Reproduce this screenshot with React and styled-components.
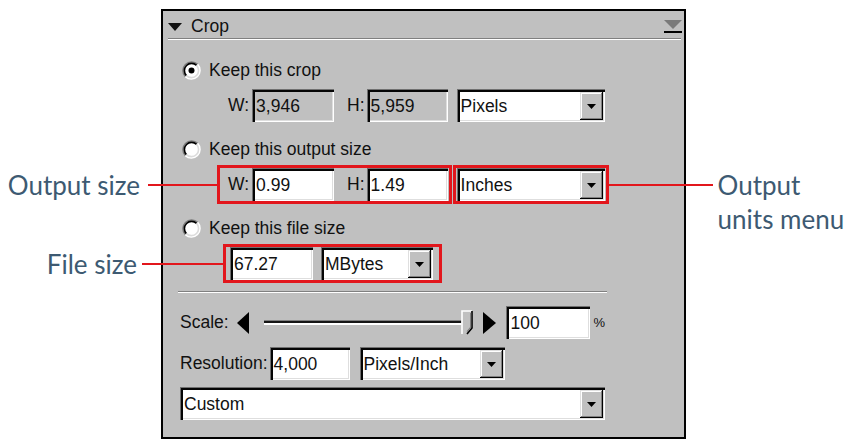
import React from "react";
import styled, { createGlobalStyle } from "styled-components";

const RED = "#e2161c";
const NOTE = "#3d5a72";

const GlobalStyle = createGlobalStyle`
  html, body { margin: 0; padding: 0; background: #fff; }
  body { font-family: "Liberation Sans", Arial, sans-serif; }
`;

const Page = styled.div`
  position: relative;
  width: 846px;
  height: 443px;
  box-sizing: border-box;
  padding: 9px 0 0 161px;
  overflow: hidden;
`;

const Panel = styled.section`
  box-sizing: border-box;
  width: 525px;
  height: 430px;
  border: 2px solid #000;
  background: #c0c0c0;
  color: #111;
  font-size: 17.5px;
  display: flex;
  flex-direction: column;
`;

const Header = styled.header`
  height: 27px;
  box-sizing: border-box;
  padding: 4px 2px 0 5px;
  display: flex;
  align-items: center;
  gap: 9px;
`;

const Title = styled.span`
  flex: 1;
`;

const Rule = styled.div`
  margin: ${(p) => p.$m || "0"};
  border-top: 1px solid #808080;
  border-bottom: 1px solid #fff;
`;

const Body = styled.div`
  padding: 19px 0 0 17px;
  width: 425px;
  display: flex;
  flex-direction: column;
`;

const Options = styled.div`
  display: flex;
  flex-direction: column;
  gap: 16px;
`;

const Option = styled.div`
  display: flex;
  flex-direction: column;
  gap: 8px;
`;

const RadioRow = styled.div`
  height: 22px;
  display: flex;
  align-items: center;
  gap: 8px;
  padding-left: 2px;
`;

const Row = styled.div`
  height: 33px;
  display: flex;
  align-items: center;
  padding-left: ${(p) => p.$indent || 0}px;
  margin-top: ${(p) => p.$mt || 0}px;
`;

const Group = styled.div`
  position: relative;
  display: flex;
  align-items: center;
  height: 33px;
  padding: ${(p) => p.$pad || "0"};
  gap: ${(p) => p.$gap || 0}px;
  margin-left: ${(p) => p.$ml || 0}px;
  box-shadow: ${(p) => (p.$hl ? `0 0 0 3px ${RED}` : "none")};
`;

const Label = styled.span`
  flex: none;
  white-space: nowrap;
  margin: ${(p) => p.$m || "0"};
  font-size: ${(p) => p.$size || "inherit"};
`;

const Field = styled.div`
  box-sizing: border-box;
  flex: none;
  width: ${(p) => (p.$w ? `${p.$w}px` : "auto")};
  height: 33px;
  display: flex;
  align-items: stretch;
  padding: 3px 2px 2px 3px;
  background: ${(p) => (p.$disabled ? "#c0c0c0" : "#fff")};
  box-shadow: inset 1px 1px 0 #707070, inset 3px 3px 0 #050505,
    inset -1px -1px 0 #fff, inset -2px -2px 0 #dedede;
`;

const FieldText = styled.span`
  flex: 1;
  display: flex;
  align-items: center;
  padding-left: 1px;
  white-space: nowrap;
  overflow: hidden;
`;

const DropButton = styled.span`
  flex: none;
  width: 23px;
  display: flex;
  align-items: center;
  justify-content: center;
  background: #c0c0c0;
  box-shadow: inset -1px -1px 0 #000, inset 1px 1px 0 #dfdfdf,
    inset -2px -2px 0 #808080, inset 2px 2px 0 #fff;
`;

const Slider = styled.div`
  flex: 1;
  display: flex;
  align-items: center;
  height: 26px;
  margin: 0 10px 0 15px;
`;

const Groove = styled.div`
  flex: 1;
  height: 0;
  border-top: 2px solid #151515;
  border-bottom: 2px solid #fff;
  box-shadow: 0 -1px 0 #808080;
`;

const StepArrow = styled.svg`
  flex: none;
  display: block;
`;

const NoteText = styled.span`
  font-family: Lato, "Open Sans", sans-serif;
  font-size: 26px;
  line-height: 34px;
  color: ${NOTE};
  white-space: nowrap;
`;

const Leader = styled.span`
  display: block;
  flex: none;
  width: ${(p) => p.$w}px;
  height: 2px;
  margin-top: ${(p) => p.$mt || 0}px;
  background: ${RED};
`;

const CalloutLeft = styled.div`
  position: absolute;
  right: calc(100% + 3px);
  top: 50%;
  transform: translateY(-50%);
  display: flex;
  align-items: center;
  gap: ${(p) => p.$gap}px;
`;

const CalloutRight = styled.div`
  position: absolute;
  left: calc(100% + 3px);
  top: 50%;
  margin-top: -17px;
  display: flex;
  align-items: flex-start;
  gap: 5px;
`;

const Radio = ({ checked }) => {
  const c = 9.5;
  const pt = (r, a) => {
    const rad = (a * Math.PI) / 180;
    return `${(c + r * Math.cos(rad)).toFixed(2)} ${(c + r * Math.sin(rad)).toFixed(2)}`;
  };
  const arc = (r, from, to) => `M${pt(r, from)} A${r} ${r} 0 0 1 ${pt(r, to)}`;
  return (
    <svg width="19" height="19" viewBox="0 0 19 19" style={{ flex: "none" }}>
      <circle cx={c} cy={c} r="8.5" fill="#fff" />
      <path d={arc(8.6, 135, 315)} stroke="#7a7a7a" strokeWidth="1.6" fill="none" />
      <path d={arc(7.2, 135, 315)} stroke="#000" strokeWidth="1.6" fill="none" />
      <path d={arc(8.6, 315, 135)} stroke="#fff" strokeWidth="1.6" fill="none" />
      <path d={arc(7.2, 315, 135)} stroke="#dcdcdc" strokeWidth="1.6" fill="none" />
      {checked && <circle cx={c} cy={c} r="3" fill="#000" />}
    </svg>
  );
};

const DownGlyph = () => (
  <svg width="9" height="5" viewBox="0 0 9 5">
    <path d="M0 0H9L4.5 5Z" fill="#000" />
  </svg>
);

const Dropdown = ({ w, children }) => (
  <Field $w={w}>
    <FieldText>{children}</FieldText>
    <DropButton>
      <DownGlyph />
    </DropButton>
  </Field>
);

const TextField = ({ w, disabled, children }) => (
  <Field $w={w} $disabled={disabled}>
    <FieldText>{children}</FieldText>
  </Field>
);

const SizePair = ({ w, h, disabled, hl, children }) => (
  <Group $hl={hl} $pad="0 1px 0 8px">
    <Label $m="0 3px 0 0">W:</Label>
    <TextField w={82} disabled={disabled}>{w}</TextField>
    <Label $m="0 2px 0 13px">H:</Label>
    <TextField w={81} disabled={disabled}>{h}</TextField>
    {children}
  </Group>
);

export default function App() {
  return (
    <Page>
      <GlobalStyle />
      <Panel>
        <Header>
          <svg width="14" height="8" viewBox="0 0 14 8">
            <path d="M0 0H14L7 8Z" fill="#111" />
          </svg>
          <Title>Crop</Title>
          <svg width="18" height="14" viewBox="0 0 18 14">
            <path d="M0 0H18L9 9Z" fill="#7a7a7a" />
            <rect x="0" y="11" width="18" height="2" fill="#000" />
          </svg>
        </Header>
        <Rule $m="0 3px 0 5px" />
        <Body>
          <Options>
            <Option>
              <RadioRow>
                <Radio checked />
                Keep this crop
              </RadioRow>
              <Row $indent={40}>
                <SizePair w="3,946" h="5,959" disabled />
                <Group $pad="0 1px" $ml={7}>
                  <Dropdown w={148}>Pixels</Dropdown>
                </Group>
              </Row>
            </Option>
            <Option>
              <RadioRow>
                <Radio />
                Keep this output size
              </RadioRow>
              <Row $indent={40}>
                <SizePair w="0.99" h="1.49" hl>
                  <CalloutLeft $gap={8}>
                    <NoteText>Output size</NoteText>
                    <Leader $w={69} />
                  </CalloutLeft>
                </SizePair>
                <Group $pad="0 1px" $ml={7} $hl>
                  <Dropdown w={148}>Inches</Dropdown>
                  <CalloutRight>
                    <Leader $w={104} $mt={16} />
                    <NoteText>
                      Output
                      <br />
                      units menu
                    </NoteText>
                  </CalloutRight>
                </Group>
              </Row>
            </Option>
            <Option>
              <RadioRow>
                <Radio />
                Keep this file size
              </RadioRow>
              <Row $indent={46}>
                <Group $hl $pad="0 6px 0 4px" $gap={8}>
                  <TextField w={83}>67.27</TextField>
                  <Dropdown w={112}>MBytes</Dropdown>
                  <CalloutLeft $gap={5}>
                    <NoteText>File size</NoteText>
                    <Leader $w={81} />
                  </CalloutLeft>
                </Group>
              </Row>
            </Option>
          </Options>
          <Rule $m="11px -2px 13px" />
          <Row>
            <Label $m="0 8px 0 0">Scale:</Label>
            <StepArrow width="12" height="22" viewBox="0 0 12 22">
              <path d="M12 0V22L0 11Z" fill="#000" />
            </StepArrow>
            <Slider>
              <Groove />
              <svg width="12" height="25" viewBox="0 0 12 25" style={{ flex: "none", marginLeft: -3 }}>
                <path d="M0.5 0.5H11.5V18L6 24.5L0.5 18Z" fill="#c0c0c0" />
                <path d="M1 24V1H11" stroke="#fff" strokeWidth="1.6" fill="none" />
                <path d="M11 1V18L6 24" stroke="#000" strokeWidth="1.6" fill="none" />
                <path d="M9.6 3V17.4L6 21.6" stroke="#808080" strokeWidth="1.2" fill="none" />
              </svg>
            </Slider>
            <StepArrow width="13" height="22" viewBox="0 0 13 22">
              <path d="M0 0V22L13 11Z" fill="#000" />
            </StepArrow>
            <Group $ml={10}>
              <TextField w={84}>100</TextField>
            </Group>
            <Label $m="0 0 0 3px" $size="13px">%</Label>
          </Row>
          <Row $mt={8}>
            <Label $m="0 2px 0 0">Resolution:</Label>
            <TextField w={80}>4,000</TextField>
            <Group $ml={10}>
              <Dropdown w={145}>Pixels/Inch</Dropdown>
            </Group>
          </Row>
          <Row $mt={7}>
            <Dropdown w={425}>Custom</Dropdown>
          </Row>
        </Body>
      </Panel>
    </Page>
  );
}
